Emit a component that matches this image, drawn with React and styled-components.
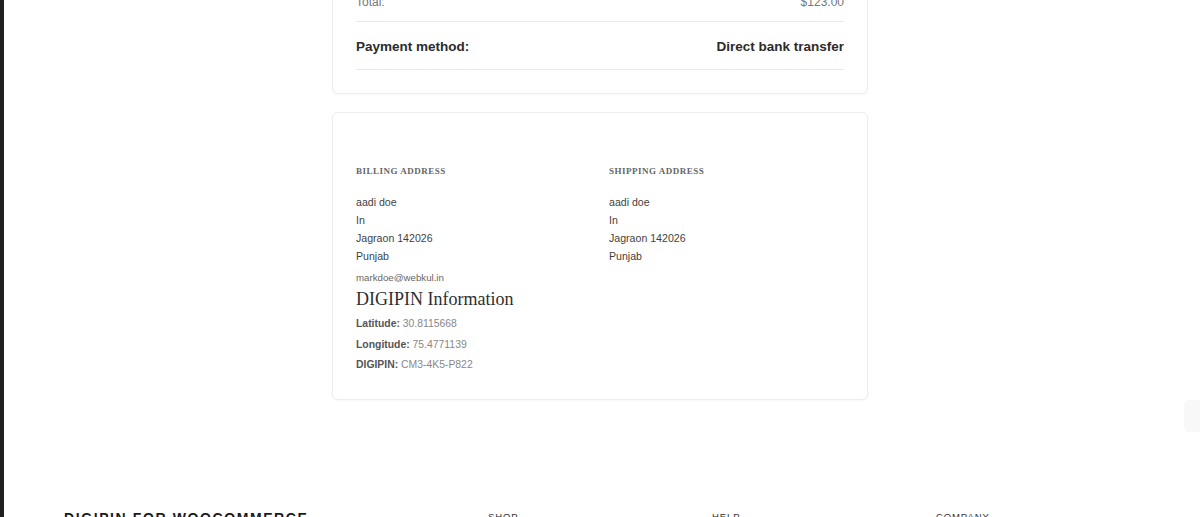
import styled, { createGlobalStyle } from "styled-components";

const GlobalStyle = createGlobalStyle`
  html, body {
    margin: 0;
    padding: 0;
  }
  body {
    background: linear-gradient(to right, #1f1f1f 4px, #ffffff 4px);
    font-family: "Liberation Sans", Arial, sans-serif;
    color: #333;
    min-height: 517px;
    overflow: hidden;
  }
`;

const Page = styled.div`
  display: flex;
  flex-direction: column;
  align-items: center;
  margin-top: -40px;
`;

const Card = styled.section`
  width: 536px;
  box-sizing: border-box;
  border: 1px solid #ededed;
  border-radius: 6px;
  box-shadow: 0 1px 3px rgba(0, 0, 0, 0.04);
  background: #fff;
  padding: ${(p) => p.$pad};
  & + & {
    margin-top: 18px;
  }
`;

const Row = styled.div`
  display: flex;
  justify-content: space-between;
  align-items: center;
  border-bottom: 1px solid #e9e9e9;
  padding: ${(p) => (p.$big ? "17px 0 14px" : "13px 0 11px")};
  font-size: ${(p) => (p.$big ? "13.5px" : "12px")};
  font-weight: ${(p) => (p.$big ? 700 : 400)};
  line-height: 16px;
  color: ${(p) => (p.$big ? "#2b2b2b" : "#777")};
`;

const Columns = styled.div`
  display: grid;
  grid-template-columns: 1fr 1fr;
  column-gap: 18px;
`;

const Col = styled.div`
  display: flex;
  flex-direction: column;
`;

const SectionTitle = styled.h3`
  margin: 0 0 16px;
  font-family: "Liberation Serif", "Times New Roman", serif;
  font-size: 9px;
  font-weight: 700;
  line-height: 12px;
  letter-spacing: 0.5px;
  text-transform: uppercase;
  color: #666;
`;

const Line = styled.div`
  font-size: 10.6px;
  line-height: 18px;
  color: #3f3f3f;
`;

const Email = styled.div`
  margin-top: 6px;
  font-size: 9.7px;
  line-height: 14px;
  color: #666;
`;

const InfoTitle = styled.h2`
  margin: 3px 0 7px;
  font-family: "Liberation Serif", "Times New Roman", serif;
  font-size: 18px;
  font-weight: 400;
  line-height: 22px;
  color: #2f2f2f;
`;

const Info = styled.p`
  margin: 0 0 6.5px;
  font-size: 10.4px;
  line-height: 14px;
  color: #888;
  b {
    color: #555;
  }
`;

const Footer = styled.footer`
  display: grid;
  grid-template-columns: 2fr 1fr 1fr 1fr;
  column-gap: 24px;
  margin: 110px 64px 0 64px;
`;

const Brand = styled.div`
  font-size: 14px;
  font-weight: 700;
  letter-spacing: 1.6px;
  color: #1c1c1c;
  text-transform: uppercase;
`;

const FootHead = styled.div`
  font-size: 9.5px;
  letter-spacing: 0.9px;
  color: #333;
  padding-top: 1px;
  text-transform: uppercase;
`;

const ScrollTab = styled.div`
  position: fixed;
  right: 0;
  top: 400px;
  width: 16px;
  height: 32px;
  border-radius: 6px 0 0 6px;
  background: #f8f8f8;
`;

const billing = ["aadi doe", "In", "Jagraon 142026", "Punjab"];
const shipping = ["aadi doe", "In", "Jagraon 142026", "Punjab"];

export default function App() {
  return (
    <>
      <GlobalStyle />
      <Page>
        <Card $pad="20px 23px 23px">
          <Row>
            <span>Total:</span>
            <span>$123.00</span>
          </Row>
          <Row $big>
            <span>Payment method:</span>
            <span>Direct bank transfer</span>
          </Row>
        </Card>

        <Card $pad="52px 23px 20px">
          <Columns>
            <Col>
              <SectionTitle>Billing address</SectionTitle>
              {billing.map((l, i) => (
                <Line key={i}>{l}</Line>
              ))}
              <Email>markdoe@webkul.in</Email>
              <InfoTitle>DIGIPIN Information</InfoTitle>
              <Info>
                <b>Latitude:</b> 30.8115668
              </Info>
              <Info>
                <b>Longitude:</b> 75.4771139
              </Info>
              <Info>
                <b>DIGIPIN:</b> CM3-4K5-P822
              </Info>
            </Col>
            <Col>
              <SectionTitle>Shipping address</SectionTitle>
              {shipping.map((l, i) => (
                <Line key={i}>{l}</Line>
              ))}
            </Col>
          </Columns>
        </Card>
      </Page>

      <Footer>
        <Brand>DIGIPIN for WooCommerce</Brand>
        <FootHead>Shop</FootHead>
        <FootHead>Help</FootHead>
        <FootHead>Company</FootHead>
      </Footer>
      <ScrollTab />
    </>
  );
}
